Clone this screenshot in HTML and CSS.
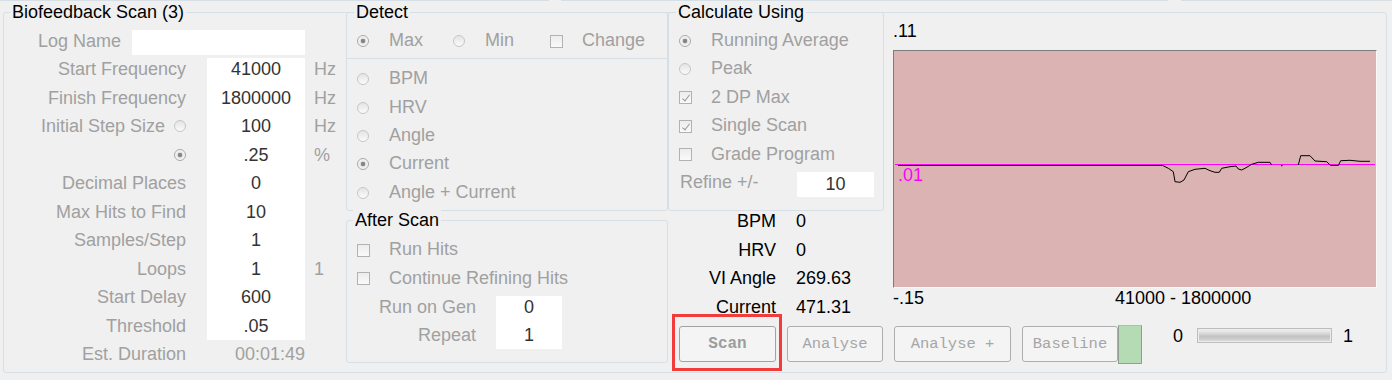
FILE: index.html
```html
<!DOCTYPE html>
<html lang="en">
<head>
    <meta charset="UTF-8">
    <title>Biofeedback Scan</title>
    <link rel="stylesheet" href="styles.css">
</head>
<body>
<div class="topline">
    <span class="seg s1"></span><span class="seg s2"></span><span class="seg s3"></span>
</div>
<div class="frame">
    <!-- scan settings -->
    <div class="col-left">
        <div class="cap">Biofeedback Scan (3)</div>
        <div class="fields">
            <div class="logrow"><span class="lbl">Log Name</span><span class="logbox"></span></div><div></div>

            <div class="lbl">Start Frequency</div><div class="val first">41000</div><div class="unit">Hz</div>
            <div class="lbl">Finish Frequency</div><div class="val">1800000</div><div class="unit">Hz</div>
            <div class="lbl">Initial Step Size <span class="radio"></span></div><div class="val">100</div><div class="unit">Hz</div>
            <div class="lbl"><span class="radio on"></span></div><div class="val">.25</div><div class="unit">%</div>
            <div class="lbl">Decimal Places</div><div class="val">0</div><div class="unit"></div>
            <div class="lbl">Max Hits to Find</div><div class="val">10</div><div class="unit"></div>
            <div class="lbl">Samples/Step</div><div class="val">1</div><div class="unit"></div>
            <div class="lbl">Loops</div><div class="val">1</div><div class="unit">1</div>
            <div class="lbl">Start Delay</div><div class="val">600</div><div class="unit"></div>
            <div class="lbl">Threshold</div><div class="val">.05</div><div class="unit"></div>
            <div class="lbl">Est. Duration</div><div class="val ro">00:01:49</div><div class="unit"></div>
        </div>
    </div>

    <!-- detect / after scan -->
    <div class="col-mid">
        <div class="box detect">
            <div class="cap">Detect</div>
            <div class="toprow">
                <div class="opt w-max"><span class="slot"><span class="radio on"></span></span>Max</div>
                <div class="opt w-min"><span class="slot"><span class="radio"></span></span>Min</div>
                <div class="opt"><span class="slot"><span class="chk"></span></span>Change</div>
            </div>
            <div class="sub">
                <div class="opt"><span class="slot"><span class="radio"></span></span>BPM</div>
                <div class="opt"><span class="slot"><span class="radio"></span></span>HRV</div>
                <div class="opt"><span class="slot"><span class="radio"></span></span>Angle</div>
                <div class="opt"><span class="slot"><span class="radio on"></span></span>Current</div>
                <div class="opt"><span class="slot"><span class="radio"></span></span>Angle + Current</div>
            </div>
        </div>
        <div class="box after">
            <div class="cap">After Scan</div>
            <div class="list">
                <div class="opt"><span class="slot"><span class="chk"></span></span>Run Hits</div>
                <div class="opt"><span class="slot"><span class="chk"></span></span>Continue Refining Hits</div>
                <div class="gen">
                    <div class="lbl">Run on Gen</div><div class="val first">0</div>
                    <div class="lbl">Repeat</div><div class="val">1</div>
                </div>
            </div>
        </div>
    </div>

    <!-- calculate, readouts, chart, buttons -->
    <div class="col-right">
        <div class="upper">
            <div class="calc-col">
                <div class="box calc">
                    <div class="cap">Calculate Using</div>
                    <div class="list">
                        <div class="opt"><span class="slot"><span class="radio on"></span></span>Running Average</div>
                        <div class="opt"><span class="slot"><span class="radio"></span></span>Peak</div>
                        <div class="opt"><span class="slot"><span class="chk on"></span></span>2 DP Max</div>
                        <div class="opt"><span class="slot"><span class="chk on"></span></span>Single Scan</div>
                        <div class="opt"><span class="slot"><span class="chk"></span></span>Grade Program</div>
                        <div class="refine"><span class="lbl">Refine +/-</span><span class="inbox">10</span></div>
                    </div>
                </div>
                <div class="readouts">
                    <div class="rk">BPM</div><div>0</div>
                    <div class="rk">HRV</div><div>0</div>
                    <div class="rk">VI Angle</div><div>269.63</div>
                    <div class="rk">Current</div><div>471.31</div>
                </div>
            </div>
            <div class="chart-col">
                <div class="ymax">.11</div>
                <div class="plot">
                    <svg class="trace" width="482" height="236" viewBox="0 0 482 236">
                        <line x1="1" y1="113.5" x2="481" y2="113.5" stroke="#ff00ff" stroke-width="1"/>
                        <polyline fill="none" stroke="#000" stroke-width="1"
                                  points="4,114.5 268.7,114.5 274.3,117.3 279.3,120.7 281,130.7 286,131.3 290,129 294.3,120.7 301,118.3 311,117.3 316,119.7 321,121.3 325.3,121.3 327.7,117.3 336,115.7 342,115 344.3,118 347.7,119 351,117.3 357.7,113.3 364.3,111.3 376,111.3 377.7,114"/>
                        <rect x="387" y="114" width="1.5" height="1.2" fill="#000"/>
                        <polyline fill="none" stroke="#000" stroke-width="1"
                                  points="404.3,114 406.7,104.7 416,104.7 421,110 432.7,110.7 436.7,114.5 444.3,114.5 446.7,109.7 456,109.3 466,110.3 476,110.3"/>
                    </svg>
                    <span class="ymid">.01</span>
                </div>
                <div class="xaxis"><span>-.15</span><span class="range">41000 - 1800000</span></div>
            </div>
        </div>
        <div class="btnrow">
            <span class="hl"><button class="btn b-scan">Scan</button></span>
            <button class="btn b-an">Analyse</button>
            <button class="btn b-anp">Analyse +</button>
            <button class="btn b-base">Baseline</button>
            <span class="led"></span>
            <span class="pmin">0</span>
            <span class="bar"></span>
            <span class="pmax">1</span>
        </div>
    </div>
</div>
</body>
</html>
```

FILE: styles.css
```css
body{
    margin: 0;
    width: 1392px;
    height: 380px;
    overflow: hidden;
    background: #f0f0f0;
    font-family: "Liberation Sans", Arial, sans-serif;
    font-size: 18px;
    color: #000;
}
.topline{
    display: flex;
    height: 1px;
}
.seg{
    height: 1px;
    background: #d5dfe5;
}
.s1{ width: 549px; }
.s2{ width: 607px; margin-left: 12px; }
.s3{ flex: 1; margin-left: 13px; }

.frame{
    box-sizing: border-box;
    margin: 11px 0 0 3px;
    width: 1384px;
    height: 361px;
    border: 1px solid #d5dfe5;
    border-radius: 3px;
    display: flex;
}
.box{
    box-sizing: border-box;
    border: 1px solid #d5dfe5;
    border-radius: 3px;
}
.cap{
    width: max-content;
    margin: -11px 0 0 7px;
    padding: 0 2px;
    line-height: 20px;
    background: #f0f0f0;
    color: #000;
}
.lbl{ color: #a0a0a0; white-space: nowrap; }

/* left column */
.col-left{
    width: 342px;
    flex: none;
}
.col-left > .cap{ margin-left: 6px; }
.fields{
    margin-top: 4.55px;
    display: grid;
    grid-template-columns: 203px 98px 1fr;
    grid-auto-rows: 28.5px;
    line-height: 28.5px;
}
.fields .lbl{
    padding-right: 21px;
    display: flex;
    justify-content: flex-end;
    align-items: center;
}
.fields .lbl .radio{ margin-left: 9px; }
.logrow{
    grid-column: 1 / 3;
    display: flex;
    justify-content: flex-end;
    align-items: flex-end;
}
.fields .logrow .lbl{ padding: 0; align-self: stretch; }
.logbox{
    width: 173px;
    height: 25px;
    margin-left: 11px;
    background: #fff;
}
.val{
    background: #fff;
    text-align: center;
    color: #333;
}
.val.first{
    background: linear-gradient(to bottom, transparent 3px, #fff 3px);
}
.val.ro{
    background: none;
    text-align: right;
    color: #a0a0a0;
}
.unit{
    padding-left: 9px;
    color: #a0a0a0;
}

/* controls */
.radio{
    display: inline-block;
    box-sizing: border-box;
    width: 12px;
    height: 12px;
    border-radius: 50%;
    border: 1px solid #c6c6c6;
    background: linear-gradient(to bottom, #e4e4e4, #fbfbfb);
}
.radio.on{
    border-color: #a8a8a8;
    background: radial-gradient(circle, #7c7c7c 0, #8e8e8e 2px, #e2e2e2 2.6px, #f6f6f6 4.5px);
}
.chk{
    display: inline-block;
    box-sizing: border-box;
    width: 13px;
    height: 13px;
    border: 1px solid #b2b2b2;
    background: linear-gradient(to bottom, #ececec, #fafafa);
    position: relative;
}
.chk.on::after{
    content: "";
    position: absolute;
    left: 3.5px;
    top: 1px;
    width: 3px;
    height: 7px;
    border: solid #9a9a9a;
    border-width: 0 1.5px 1.5px 0;
    transform: rotate(38deg);
}
.opt{
    display: flex;
    align-items: center;
    height: 28.4px;
    padding-left: 10px;
    color: #a0a0a0;
    white-space: nowrap;
}
.slot{
    width: 32px;
    flex: none;
    display: flex;
    align-items: center;
    padding-top: 1px;
}

/* detect column */
.col-mid{
    width: 322px;
    flex: none;
}
.detect{
    margin-top: -1px;
    height: 199px;
}
.toprow{
    margin-top: 4.55px;
    display: flex;
}
.toprow .opt{ height: 28.5px; }
.w-max{ width: 86px; }
.w-min{ width: 87px; }
.toprow .opt + .opt{ padding-left: 10px; }
.sub{
    margin-top: 2.95px;
    padding-top: 5.6px;
    border-top: 1px solid #d5dfe5;
}
.after{
    margin-top: 9px;
    height: 143px;
}
.after .cap{ margin-left: 6px; }
.after .list{ margin-top: 5.8px; }
.gen{
    display: grid;
    grid-template-columns: 129px 66px;
    column-gap: 20px;
    grid-auto-rows: 28.4px;
    line-height: 28.4px;
}
.gen .lbl{ text-align: right; }

/* right part */
.col-right{
    width: 718px;
    flex: none;
}
.upper{
    display: flex;
    height: 305px;
}
.calc-col{
    width: 216px;
    flex: none;
    margin-top: -1px;
}
.calc{ height: 199px; }
.calc .list{ margin-top: 4.3px; }
.refine{
    display: flex;
    align-items: center;
    height: 28.4px;
    padding-left: 11px;
}
.inbox{
    margin-left: auto;
    margin-right: 9px;
    align-self: flex-end;
    margin-bottom: -0.5px;
    width: 77px;
    height: 25px;
    line-height: 25px;
    background: #fff;
    text-align: center;
    color: #333;
}
.readouts{
    display: grid;
    grid-template-columns: 108px 1fr;
    column-gap: 20px;
    row-gap: 8.5px;
    line-height: 20px;
}
.rk{ text-align: right; }

.chart-col{
    width: 502px;
    flex: none;
    padding-top: 8px;
}
.ymax{
    line-height: 20px;
    padding-left: 9px;
}
.plot{
    position: relative;
    box-sizing: border-box;
    margin: 9px 0 0 9px;
    width: 484px;
    height: 238px;
    background: #dbb3b3;
    border: 1px solid;
    border-color: #7c7c7c #fafafa #fafafa #7c7c7c;
}
.trace{ display: block; }
.ymid{
    position: absolute;
    left: 4px;
    top: 114px;
    line-height: 20px;
    color: #ff00ff;
}
.xaxis{
    display: flex;
    line-height: 20px;
    padding-left: 9px;
}
.range{ margin-left: 191px; }

/* buttons */
.btnrow{
    display: flex;
    align-items: flex-start;
    margin-top: 8px;
    padding-left: 11px;
}
.btn{
    box-sizing: border-box;
    height: 36px;
    margin: 0 11px 0 0;
    padding: 0;
    border: 1px solid #adadad;
    border-radius: 3px;
    background: #f4f4f4;
    font-family: "Liberation Mono", "Courier New", monospace;
    font-size: 15.5px;
    color: #a6a6a6;
}
.hl{
    position: relative;
    display: flex;
    margin-right: 11px;
}
.hl::after{
    content: "";
    position: absolute;
    top: -12px;
    left: -7px;
    right: -6px;
    bottom: -9px;
    border: 3px solid #f23c3c;
}
.b-scan{
    width: 97px;
    margin: 0;
    font-size: 16px;
    font-weight: bold;
    color: #9d9d9d;
    border-color: #a2a2a2;
}
.b-an{ width: 96px; }
.b-anp{ width: 117px; }
.b-base{ width: 96px; margin-right: 0; }
.led{
    box-sizing: border-box;
    width: 24px;
    height: 39px;
    margin-top: -1px;
    background: #b5dbb5;
    border: 1px solid #939e93;
    border-top-color: #b0bdb0;
}
.pmin,
.pmax{
    line-height: 20px;
}
.pmin{ margin-left: 31px; }
.bar{
    box-sizing: border-box;
    margin: 2px 0 0 14px;
    width: 135px;
    height: 15px;
    border: 1px solid #bdbdbd;
    box-shadow: inset 0 0 0 1px #ececec;
    background: linear-gradient(to bottom, #f2f2f2 0%, #d8d8d8 35%, #c2c2c2 55%, #cecece 80%, #e2e2e2 100%);
}
.pmax{ margin-left: 11px; }
```
